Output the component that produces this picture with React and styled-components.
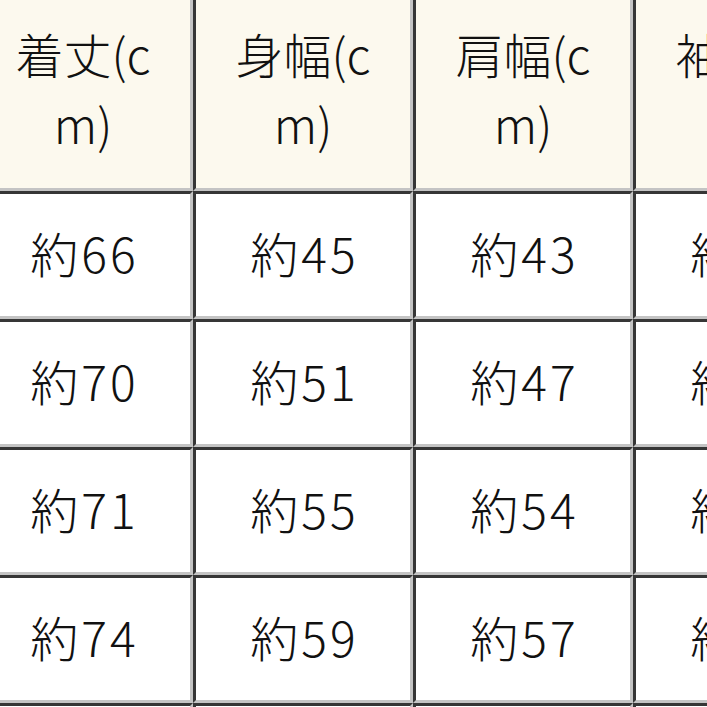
import React from "react";
import styled, { createGlobalStyle } from "styled-components";

const GlobalStyle = createGlobalStyle`
  html, body {
    margin: 0;
    padding: 0;
    background: #ffffff;
  }
`;

const Viewport = styled.div`
  width: 707px;
  height: 707px;
  overflow: hidden;
  background: #ffffff;
`;

const Table = styled.table`
  margin: -3px 0 0 -27px;
  border-collapse: separate;
  border-spacing: 0;
  table-layout: fixed;
  width: 1100px;
  font-family: "Noto Sans CJK JP", "Noto Sans", sans-serif;
  font-weight: 300;
  color: #111111;
`;

const Cell = styled.td`
  width: 220px;
  box-sizing: border-box;
  border-top: 3px solid #363636;
  border-left: 3px solid #363636;
  border-bottom: 3px solid #c4c4c4;
  border-right: 3px solid #c4c4c4;
  text-align: center;
  vertical-align: middle;
  font-size: 48px;
  word-break: break-all;
`;

const HeadCell = styled(Cell).attrs({ as: "th" })`
  background: #fcf9ee;
  font-weight: 300;
  height: 194px;
  line-height: 70px;
  padding: 0 36px 12px;
`;

const BodyCell = styled(Cell)`
  background: #ffffff;
  height: 128px;
  line-height: 1.2;
  padding: 0 0 5px 3px;
  letter-spacing: 3px;
`;

const headers = ["着丈(cm)", "身幅(cm)", "肩幅(cm)", "袖丈(cm)", "裄丈(cm)"];

const rows = [
  ["約66", "約45", "約43", "約60", "約80"],
  ["約70", "約51", "約47", "約62", "約84"],
  ["約71", "約55", "約54", "約64", "約88"],
  ["約74", "約59", "約57", "約66", "約90"],
  ["約76", "約63", "約60", "約68", "約92"],
];

const App = () => {
  return (
    <>
      <GlobalStyle />
      <Viewport>
        <Table>
          <thead>
            <tr>
              {headers.map((h) => (
                <HeadCell key={h}>{h}</HeadCell>
              ))}
            </tr>
          </thead>
          <tbody>
            {rows.map((row, i) => (
              <tr key={i}>
                {row.map((v, j) => (
                  <BodyCell key={j}>{v}</BodyCell>
                ))}
              </tr>
            ))}
          </tbody>
        </Table>
      </Viewport>
    </>
  );
};

export default App;
